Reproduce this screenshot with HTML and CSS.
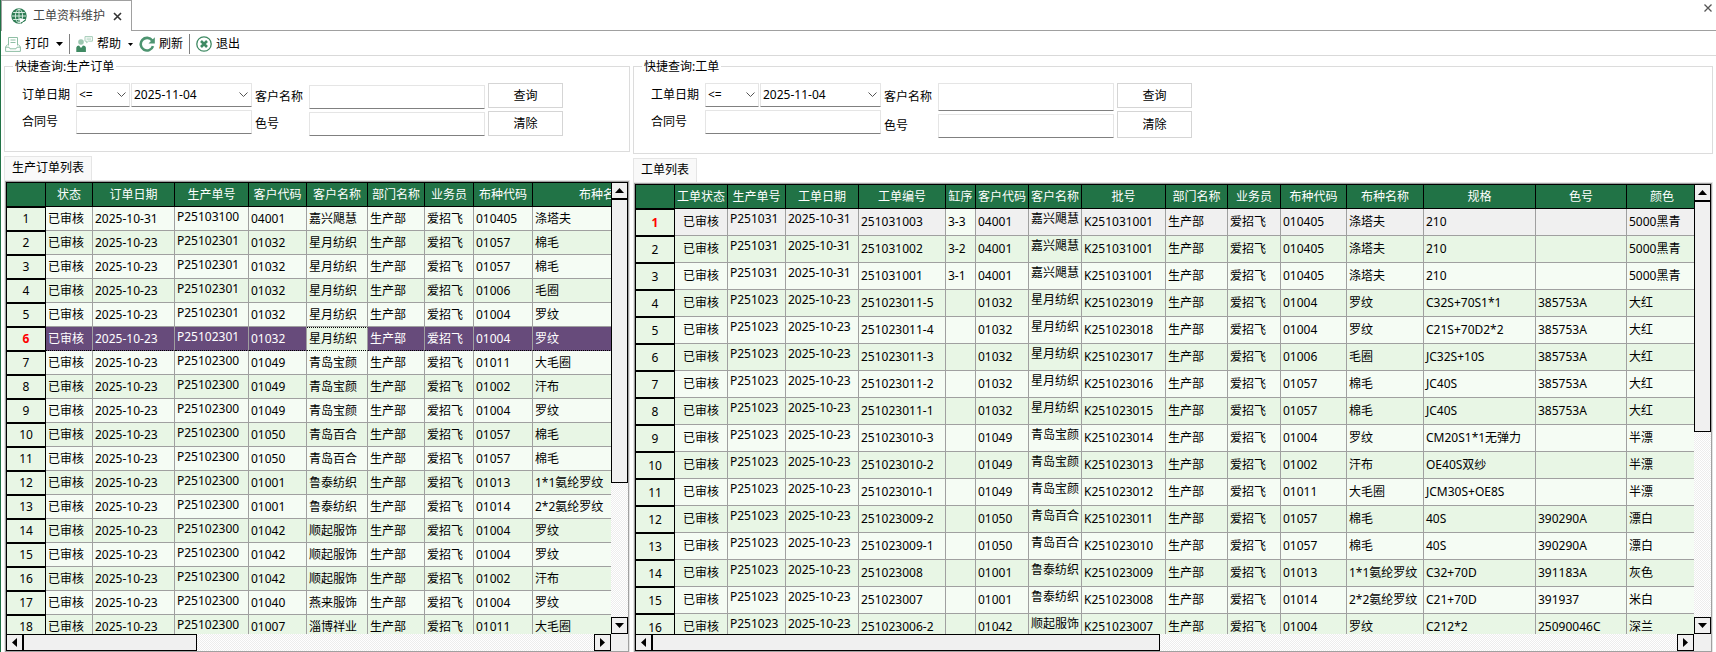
FILE: index.html
```
<!DOCTYPE html>
<html lang="zh-CN">
<head>
  <meta charset="UTF-8">
  <meta name="viewport" content="width=device-width, initial-scale=1.0">
  <title>工单资料维护</title>
  <link rel="stylesheet" href="styles.css">
</head>
<body>
  <header class="tabs">
    <div class="tab">
      <svg class="icon" width="16" height="16" viewBox="0 0 16 16">
        <circle cx="8" cy="8" r="7.7" fill="#2f7d55"/>
        <g fill="none" stroke="#d5e9de" stroke-width="1">
          <path d="M8 1v14M1 8h14M2.2 4.5h11.6M2.2 11.5h11.6"/>
          <ellipse cx="8" cy="8" rx="3.6" ry="6.8"/>
        </g>
        <path d="M8.5 10l6 1.5-2 1 2.5 2.5h-3.5l-1-1-1 1.5z" fill="#fff"/>
        <path d="M10 15.2l5-3.4" stroke="#2f7d55"/>
      </svg>
      <span>工单资料维护</span>
      <button class="tab-close" aria-label="关闭">
        <svg width="9" height="9" viewBox="0 0 9 9"><path d="M1 1l7 7M8 1L1 8" stroke="#333" stroke-width="1.6"/></svg>
      </button>
    </div>
    <button class="page-close" aria-label="关闭全部">
      <svg width="8" height="8" viewBox="0 0 8 8"><path d="M.5.5l7 7M7.5.5l-7 7" stroke="#555" stroke-width="1.3"/></svg>
    </button>
  </header>

  <nav class="toolbar">
    <button class="tool">
      <svg class="icon" width="16" height="16" viewBox="0 0 16 16" fill="none" stroke="#8fbfa5">
        <path d="M3.5 9.500V1.500h9v8"/>
        <path d="M5.500 4h5M5.500 6.500h5"/>
        <path d="M2.500 8.500L.6 11v4.400h14.800V11l-1.900-2.500M.6 11.200h3.400l1 1.600h6l1-1.600h3.400"/>
      </svg>
      打印
      <svg class="caret" width="7" height="4" viewBox="0 0 7 4"><path d="M0 0h7L3.500 4z"/></svg>
    </button>
    <span class="separator"></span>
    <button class="tool">
      <svg class="icon" width="17" height="16" viewBox="0 0 17 16">
        <path d="M9 .6h7.400v4.600h-4l-1.800 1.600V5.200H9z" fill="#fff" stroke="#a5cdb8"/>
        <path d="M10.500 2.200h4.500M10.500 3.700h4.500" stroke="#a5cdb8" stroke-width=".7"/>
        <circle cx="5" cy="6" r="2.800" fill="#9cc7b0"/>
        <path d="M.3 16v-4.500q.4-2 2.700-2l2 2.500 2-2.500q2.600.2 2.900 2V16z" fill="#3f8a63"/>
      </svg>
      帮助
      <svg class="caret" width="5" height="3" viewBox="0 0 5 3"><path d="M0 0h5L2.500 3z"/></svg>
    </button>
    <button class="tool">
      <svg class="icon" width="16" height="16" viewBox="0 0 16 16">
        <path d="M13.200 4.600A6.300 6.300 0 1 0 14 10.200" fill="none" stroke="#4d9470" stroke-width="2.600"/>
        <path d="M15.800 1.200v6.300H9.500z" fill="#4d9470"/>
      </svg>
      刷新
    </button>
    <span class="separator"></span>
    <button class="tool">
      <svg class="icon" width="16" height="16" viewBox="0 0 16 16" fill="none" stroke="#3f8a63">
        <circle cx="8" cy="8" r="7.200" stroke-width="1.300"/>
        <path d="M5 5l6 6M11 5l-6 6" stroke-width="2.600"/>
      </svg>
      退出
    </button>
  </nav>

  <main>
    <section class="panel orders">
      <fieldset>
        <legend>快捷查询:生产订单</legend>
        <form class="query">
          <div class="fields">
            <label for="order-date">订单日期</label>
            <div class="date-range">
              <div class="combo compare">
                <select aria-label="比较"><option>&lt;=</option></select>
                <svg width="9" height="6" viewBox="0 0 9 6"><path d="M.5.5l4 4 4-4"/></svg>
              </div>
              <div class="combo">
                <select id="order-date"><option>2025-11-04</option></select>
                <svg width="9" height="6" viewBox="0 0 9 6"><path d="M.5.5l4 4 4-4"/></svg>
              </div>
            </div>
            <label for="order-contract">合同号</label>
            <input id="order-contract" type="text">
          </div>
          <div class="fields second">
            <label for="order-customer">客户名称</label>
            <input id="order-customer" type="text">
            <label for="order-color">色号</label>
            <input id="order-color" type="text">
          </div>
          <div class="actions">
            <button type="button">查询</button>
            <button type="button">清除</button>
          </div>
        </form>
      </fieldset>
      <div class="list-tab">生产订单列表</div>
      <div class="list-page">
        <div class="grid">
          <div class="grid-view"><table id="orders"></table></div>
          <div class="scroll vertical">
            <button aria-label="向上"><svg width="9" height="5" viewBox="0 0 9 5"><path d="M0 5h9L4.500 0z"/></svg></button>
            <div class="track"><div class="thumb"></div></div>
            <button aria-label="向下"><svg width="9" height="5" viewBox="0 0 9 5"><path d="M0 0h9L4.500 5z"/></svg></button>
          </div>
          <div class="scroll horizontal">
            <button aria-label="向左"><svg width="5" height="9" viewBox="0 0 5 9"><path d="M5 0v9L0 4.500z"/></svg></button>
            <div class="track"><div class="thumb"></div></div>
            <button aria-label="向右"><svg width="5" height="9" viewBox="0 0 5 9"><path d="M0 0v9l5-4.500z"/></svg></button>
          </div>
        </div>
      </div>
    </section>

    <section class="panel works">
      <fieldset>
        <legend>快捷查询:工单</legend>
        <form class="query">
          <div class="fields">
            <label for="work-date">工单日期</label>
            <div class="date-range">
              <div class="combo compare">
                <select aria-label="比较"><option>&lt;=</option></select>
                <svg width="9" height="6" viewBox="0 0 9 6"><path d="M.5.5l4 4 4-4"/></svg>
              </div>
              <div class="combo">
                <select id="work-date"><option>2025-11-04</option></select>
                <svg width="9" height="6" viewBox="0 0 9 6"><path d="M.5.5l4 4 4-4"/></svg>
              </div>
            </div>
            <label for="work-contract">合同号</label>
            <input id="work-contract" type="text">
          </div>
          <div class="fields second">
            <label for="work-customer">客户名称</label>
            <input id="work-customer" type="text">
            <label for="work-color">色号</label>
            <input id="work-color" type="text">
          </div>
          <div class="actions">
            <button type="button">查询</button>
            <button type="button">清除</button>
          </div>
        </form>
      </fieldset>
      <div class="list-tab">工单列表</div>
      <div class="list-page">
        <div class="grid">
          <div class="grid-view"><table id="works"></table></div>
          <div class="scroll vertical">
            <button aria-label="向上"><svg width="9" height="5" viewBox="0 0 9 5"><path d="M0 5h9L4.500 0z"/></svg></button>
            <div class="track"><div class="thumb"></div></div>
            <button aria-label="向下"><svg width="9" height="5" viewBox="0 0 9 5"><path d="M0 0h9L4.500 5z"/></svg></button>
          </div>
          <div class="scroll horizontal">
            <button aria-label="向左"><svg width="5" height="9" viewBox="0 0 5 9"><path d="M5 0v9L0 4.500z"/></svg></button>
            <div class="track"><div class="thumb"></div></div>
            <button aria-label="向右"><svg width="5" height="9" viewBox="0 0 5 9"><path d="M0 0v9l5-4.500z"/></svg></button>
          </div>
        </div>
      </div>
    </section>
  </main>

  <script>
const orderColumns = [
  { title: '状态', width: 47 },
  { title: '订单日期', width: 82 },
  { title: '生产单号', width: 74, className: 'top' },
  { title: '客户代码', width: 58 },
  { title: '客户名称', width: 61 },
  { title: '部门名称', width: 57 },
  { title: '业务员', width: 49 },
  { title: '布种代码', width: 59 },
  { title: '布种名称', width: 141 },
];

const orders = [
  ['2025-10-31', 'P25103100', '04001', '嘉兴飓慧', '010405', '涤塔夫'],
  ['2025-10-23', 'P25102301', '01032', '星月纺织', '01057', '棉毛'],
  ['2025-10-23', 'P25102301', '01032', '星月纺织', '01057', '棉毛'],
  ['2025-10-23', 'P25102301', '01032', '星月纺织', '01006', '毛圈'],
  ['2025-10-23', 'P25102301', '01032', '星月纺织', '01004', '罗纹'],
  ['2025-10-23', 'P25102301', '01032', '星月纺织', '01004', '罗纹'],
  ['2025-10-23', 'P25102300', '01049', '青岛宝颜', '01011', '大毛圈'],
  ['2025-10-23', 'P25102300', '01049', '青岛宝颜', '01002', '汗布'],
  ['2025-10-23', 'P25102300', '01049', '青岛宝颜', '01004', '罗纹'],
  ['2025-10-23', 'P25102300', '01050', '青岛百合', '01057', '棉毛'],
  ['2025-10-23', 'P25102300', '01050', '青岛百合', '01057', '棉毛'],
  ['2025-10-23', 'P25102300', '01001', '鲁泰纺织', '01013', '1*1氨纶罗纹'],
  ['2025-10-23', 'P25102300', '01001', '鲁泰纺织', '01014', '2*2氨纶罗纹'],
  ['2025-10-23', 'P25102300', '01042', '顺起服饰', '01004', '罗纹'],
  ['2025-10-23', 'P25102300', '01042', '顺起服饰', '01004', '罗纹'],
  ['2025-10-23', 'P25102300', '01042', '顺起服饰', '01002', '汗布'],
  ['2025-10-23', 'P25102300', '01040', '燕来服饰', '01004', '罗纹'],
  ['2025-10-23', 'P25102300', '01007', '淄博祥业', '01011', '大毛圈'],
].map(([date, no, code, customer, cloth, name]) =>
  ['已审核', date, no, code, customer, '生产部', '爱招飞', cloth, name]);

const workColumns = [
  { title: '工单状态', width: 53, className: 'center' },
  { title: '生产单号', width: 58, className: 'top' },
  { title: '工单日期', width: 73, className: 'top' },
  { title: '工单编号', width: 87 },
  { title: '缸序', width: 30 },
  { title: '客户代码', width: 53 },
  { title: '客户名称', width: 53, className: 'top' },
  { title: '批号', width: 84 },
  { title: '部门名称', width: 62 },
  { title: '业务员', width: 53 },
  { title: '布种代码', width: 66 },
  { title: '布种名称', width: 77 },
  { title: '规格', width: 112 },
  { title: '色号', width: 91 },
  { title: '颜色', width: 71 },
];

const works = [
  ['P251031', '2025-10-31', '251031003', '3-3', '04001', '嘉兴飓慧', 'K251031001', '010405', '涤塔夫', '210', '', '5000黑青'],
  ['P251031', '2025-10-31', '251031002', '3-2', '04001', '嘉兴飓慧', 'K251031001', '010405', '涤塔夫', '210', '', '5000黑青'],
  ['P251031', '2025-10-31', '251031001', '3-1', '04001', '嘉兴飓慧', 'K251031001', '010405', '涤塔夫', '210', '', '5000黑青'],
  ['P251023', '2025-10-23', '251023011-5', '', '01032', '星月纺织', 'K251023019', '01004', '罗纹', 'C32S+70S1*1', '385753A', '大红'],
  ['P251023', '2025-10-23', '251023011-4', '', '01032', '星月纺织', 'K251023018', '01004', '罗纹', 'C21S+70D2*2', '385753A', '大红'],
  ['P251023', '2025-10-23', '251023011-3', '', '01032', '星月纺织', 'K251023017', '01006', '毛圈', 'JC32S+10S', '385753A', '大红'],
  ['P251023', '2025-10-23', '251023011-2', '', '01032', '星月纺织', 'K251023016', '01057', '棉毛', 'JC40S', '385753A', '大红'],
  ['P251023', '2025-10-23', '251023011-1', '', '01032', '星月纺织', 'K251023015', '01057', '棉毛', 'JC40S', '385753A', '大红'],
  ['P251023', '2025-10-23', '251023010-3', '', '01049', '青岛宝颜', 'K251023014', '01004', '罗纹', 'CM20S1*1无弹力', '', '半漂'],
  ['P251023', '2025-10-23', '251023010-2', '', '01049', '青岛宝颜', 'K251023013', '01002', '汗布', 'OE40S双纱', '', '半漂'],
  ['P251023', '2025-10-23', '251023010-1', '', '01049', '青岛宝颜', 'K251023012', '01011', '大毛圈', 'JCM30S+OE8S', '', '半漂'],
  ['P251023', '2025-10-23', '251023009-2', '', '01050', '青岛百合', 'K251023011', '01057', '棉毛', '40S', '390290A', '漂白'],
  ['P251023', '2025-10-23', '251023009-1', '', '01050', '青岛百合', 'K251023010', '01057', '棉毛', '40S', '390290A', '漂白'],
  ['P251023', '2025-10-23', '251023008', '', '01001', '鲁泰纺织', 'K251023009', '01013', '1*1氨纶罗纹', 'C32+70D', '391183A', '灰色'],
  ['P251023', '2025-10-23', '251023007', '', '01001', '鲁泰纺织', 'K251023008', '01014', '2*2氨纶罗纹', 'C21+70D', '391937', '米白'],
  ['P251023', '2025-10-23', '251023006-2', '', '01042', '顺起服饰', 'K251023007', '01004', '罗纹', 'C212*2', '25090046C', '深兰'],
].map((row) => ['已审核', ...row.slice(0, 7), '生产部', '爱招飞', ...row.slice(7)]);

// current: selected row, focus: focused cell in that row
function displayTable(id, columns, rows, current, focus) {
  const cols = columns.map((c) => `<col style="width:${c.width}px">`).join('');
  const heads = columns.map((c) => `<th scope="col">${c.title}</th>`).join('');
  const body = rows.map((row, i) => {
    const cells = row.map((text, j) => {
      const focused = i === current && j === focus ? ' focused' : '';
      return `<td class="${columns[j].className || ''}${focused}">${text}</td>`;
    }).join('');
    return `<tr class="${i === current ? 'current' : ''}"><th scope="row">${i + 1}</th>${cells}</tr>`;
  }).join('');

  document.getElementById(id).innerHTML = `
    <colgroup><col class="row-number">${cols}</colgroup>
    <thead><tr><td></td>${heads}</tr></thead>
    <tbody>${body}</tbody>
  `;
}

displayTable('orders', orderColumns, orders, 5, 4);
displayTable('works', workColumns, works, 0, 4);
  </script>
</body>
</html>
```
FILE: styles.css
```
* {
  box-sizing: border-box;
}

body {
  display: flex;
  flex-direction: column;
  height: 100vh;
  margin: 0;
  border-left: 1px solid #217346;
  background: #fff;
  color: #000;
  font: 12px/18px "Noto Sans", "Noto Sans CJK SC", sans-serif;
  overflow: hidden;
}

button, input, select {
  font: inherit;
  color: inherit;
}

button {
  padding: 0;
  border: none;
  background: none;
}

.tabs {
  display: flex;
  justify-content: space-between;
  align-items: flex-start;
  height: 31px;
  border-bottom: 1px solid #a0a0a0;
}

.tab {
  display: flex;
  align-items: center;
  height: 31px;
  padding: 0 9px;
  border: 1px solid #a0a0a0;
  border-bottom: none;
  background: #fff;
  color: #444;
}

.tab span {
  margin: 0 8px 0 6px;
}

.tab-close,
.page-close {
  display: flex;
}

.page-close {
  padding: 4px;
}

.toolbar {
  display: flex;
  align-items: center;
  flex: none;
  height: 25px;
  padding: 2px 4px 0;
  border-bottom: 1px solid #d9d9d9;
}

.tool {
  display: flex;
  align-items: center;
  gap: 4px;
  margin-right: 6px;
}

.tool .caret {
  margin-left: 3px;
}

.separator {
  width: 1px;
  height: 20px;
  margin-right: 6px;
  background: #808080;
}

main {
  display: grid;
  grid-template-columns: 313fr 540fr;
  gap: 3px;
  flex: 1;
  min-height: 0;
  padding: 1px 3px 0;
}

.panel {
  display: flex;
  flex-direction: column;
  min-width: 0;
  min-height: 0;
}

fieldset {
  min-width: 0;
  margin: 0;
  padding: 0 8px;
  border: 1px solid #dcdcdc;
}

legend {
  padding: 0 2px;
  line-height: 19px;
}

.query {
  display: flex;
  padding: 7px 0 15px 9px;
}

.fields {
  display: grid;
  grid-template-columns: 54px 176px;
  grid-template-rows: 24px 24px;
  align-items: center;
  align-content: start;
  gap: 3px 0;
  margin-right: 3px;
}

.second {
  padding-top: 2px;
}

.works .second {
  grid-template-rows: 28px 24px;
  padding-top: 0;
}

.fields input,
.combo select {
  width: 100%;
  height: 100%;
  border: 1px solid #e5e5e5;
  border-bottom-color: #808080;
  border-radius: 1px;
  background: #fff;
}

.date-range {
  display: flex;
  gap: 1px;
  height: 24px;
}

.combo {
  display: grid;
  flex: 1;
  align-items: center;
}

.combo.compare {
  flex: none;
  width: 54px;
}

.combo select {
  grid-area: 1 / 1;
  padding: 0 2px;
  appearance: none;
}

.combo svg {
  grid-area: 1 / 1;
  justify-self: end;
  margin-right: 4px;
  fill: none;
  stroke: #555;
  pointer-events: none;
}

.actions {
  display: grid;
  grid-template-rows: 25px 25px;
  gap: 3px;
}

.works .actions {
  grid-template-rows: 25px 27px;
}

.actions button {
  width: 75px;
  border: 1px solid #d5d5d5;
  background: #fff;
}

.list-tab {
  align-self: flex-start;
  height: 24px;
  margin-top: 4px;
  padding: 0 7px;
  border: 1px solid #e5e5e5;
  border-bottom: none;
  background: #f9f9f9;
  line-height: 22px;
}

.list-page {
  flex: 1;
  min-height: 0;
  border: 1px solid #e5e5e5;
  border-bottom: none;
}

.grid {
  display: grid;
  grid-template-columns: minmax(0, 1fr) 17px;
  grid-template-rows: minmax(0, 1fr) 17px;
  height: 100%;
  border: 1px solid #a0a0a0;
  background: #f0f0f0;
}

.grid-view {
  overflow: hidden;
  border-top: 1px solid #000;
  border-left: 1px solid #000;
  background: #fff;
}

table {
  width: 0;
  table-layout: fixed;
  border-collapse: separate;
  border-spacing: 0;
  white-space: nowrap;
}

.row-number {
  width: 39px;
}

tr {
  height: 24px;
}

.works tbody tr {
  height: 27px;
}

th, td {
  padding: 0 2px;
  font-weight: normal;
  line-height: 18px;
  overflow: hidden;
}

thead th,
thead td {
  padding: 0;
  border-right: 1px solid #000;
  border-bottom: 1px solid #000;
  background: #217346;
  color: #fff;
}

tbody th {
  border: solid #000;
  border-width: 1px 1px 1px 0;
  background: #e8f6e5;
}

tbody td {
  border-right: 1px solid #a0a0a0;
  border-bottom: 1px solid #a0a0a0;
  background: #f5fcf4;
}

tbody tr:nth-child(even) td {
  background: #e8f6e5;
}

td.center {
  text-align: center;
}

td.top {
  vertical-align: top;
  line-height: 20px;
}

.current th {
  color: #f00;
  font-weight: bold;
}

.orders .current td {
  border-bottom: 1px dotted #000;
  background: #674b7b;
  color: #fff;
}

.orders .current td.focused {
  border-top: 1px dotted #000;
  background: #e8f6e5;
  color: #000;
}

.works .current td {
  background: #f0f0f0;
}

.works .current td.focused {
  background: #f5fcf4;
}

.scroll {
  display: flex;
}

.vertical {
  flex-direction: column;
}

.scroll button {
  display: flex;
  flex: none;
  align-items: center;
  justify-content: center;
  width: 17px;
  height: 17px;
  border: 1px solid #000;
  background: #f0f0f0;
}

.track {
  flex: 1;
  min-width: 0;
  min-height: 0;
  background: repeating-conic-gradient(#ededed 0 25%, #fff 0 50%) 0 0 / 2px 2px;
}

.thumb {
  border: 1px solid #000;
  background: #f0f0f0;
}

.orders .vertical .thumb {
  height: 68%;
}

.works .vertical .thumb {
  height: 55.5%;
}

.horizontal .thumb {
  width: 30.5%;
  height: 100%;
}

.works .horizontal .thumb {
  width: 49.6%;
}
```
